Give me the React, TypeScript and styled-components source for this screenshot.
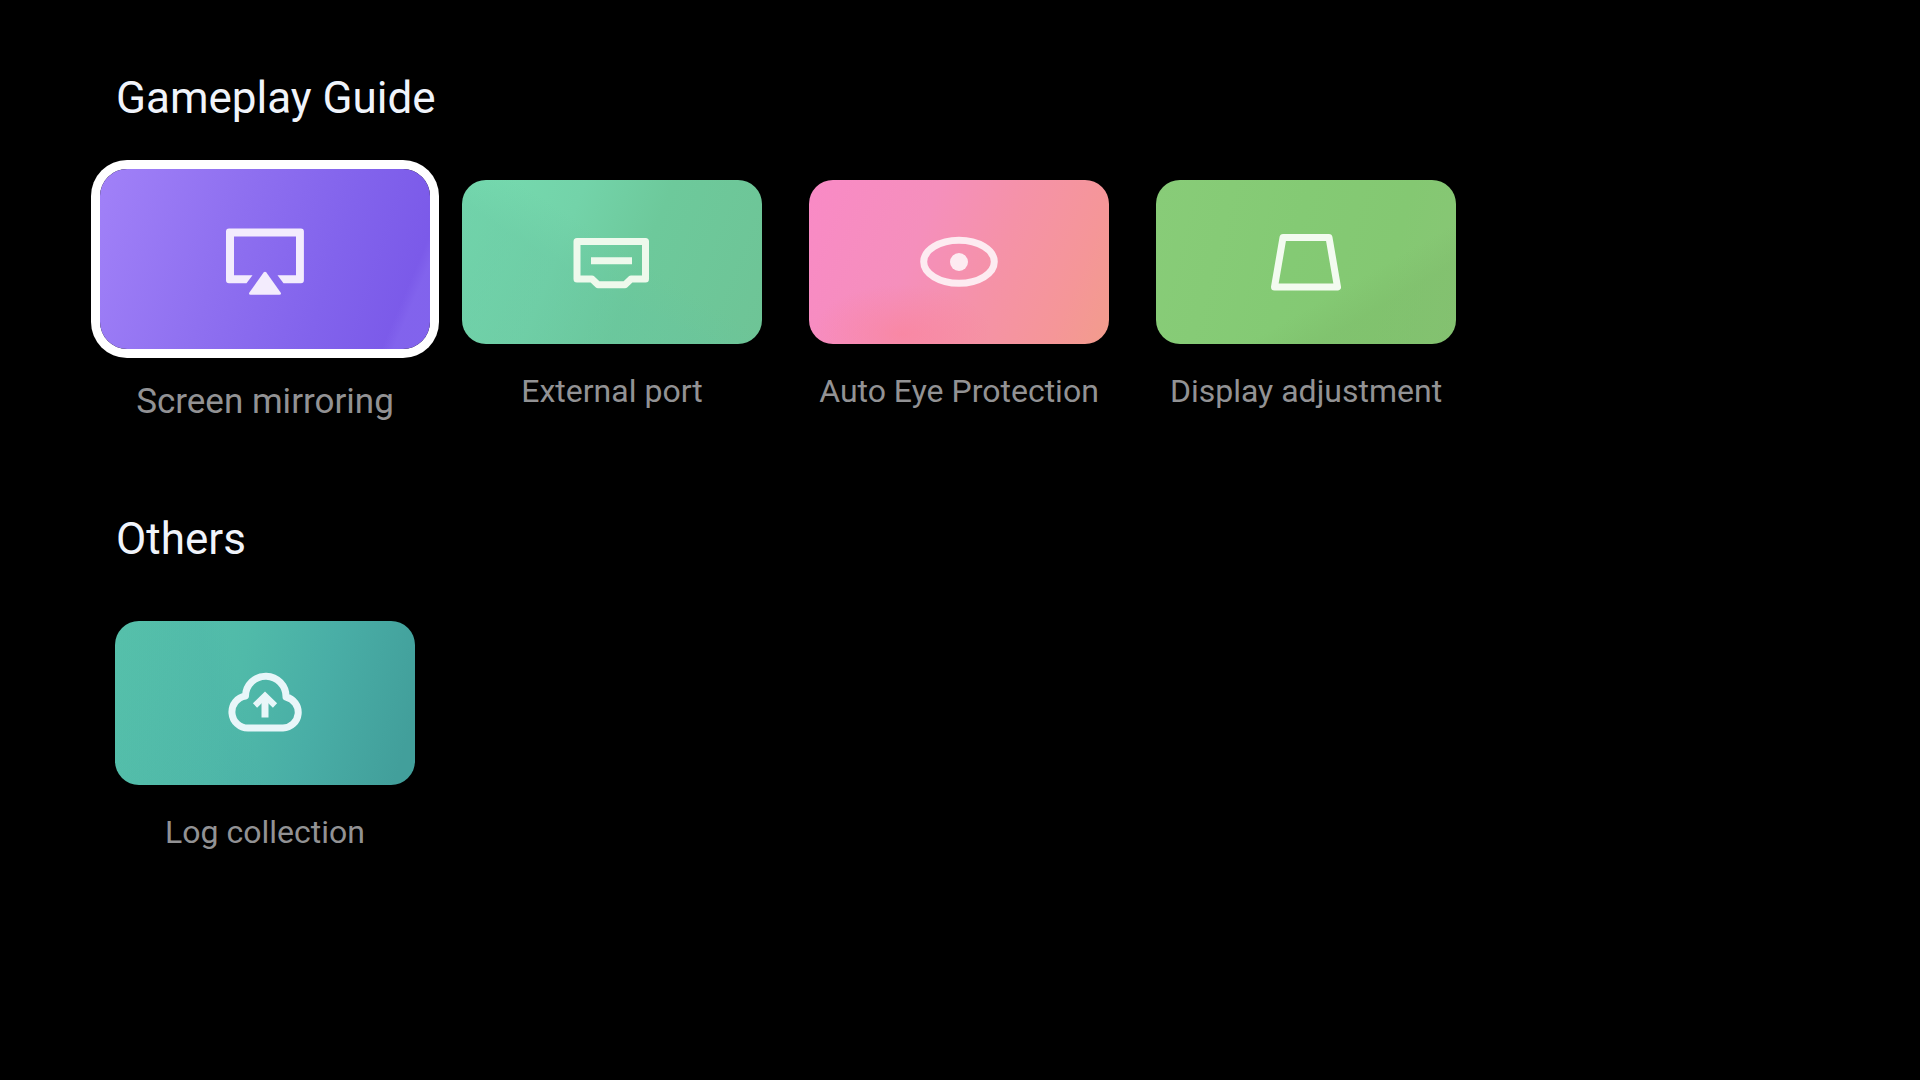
import React from "react";
import styled, { createGlobalStyle, css } from "styled-components";

const GlobalStyle = createGlobalStyle`
  *, *::before, *::after { box-sizing: border-box; }
  body {
    margin: 0;
    background: #000;
    font-family: Roboto, "Noto Sans", sans-serif;
  }
`;

const Page = styled.main`
  display: flex;
  flex-direction: column;
  gap: 102px;
  min-height: 100vh;
  padding: 72px 115px;
`;

const Section = styled.section`
  display: flex;
  flex-direction: column;
  gap: 56px;
`;

const Heading = styled.h2`
  margin: 0;
  padding: 0 1px;
  color: #f0f4fb;
  font-size: 44px;
  font-weight: 400;
  line-height: 52px;
`;

const CardRow = styled.div`
  display: flex;
  flex-wrap: wrap;
  align-items: flex-start;
  gap: 47px;
`;

const Tile = styled.span<{ $fill: string }>`
  display: flex;
  align-items: center;
  justify-content: center;
  width: 100%;
  height: 164px;
  border-radius: 24px;
  background: ${({ $fill }) => $fill};
`;

const Label = styled.span`
  font-size: 32px;
  line-height: 40px;
  white-space: nowrap;
`;

const Card = styled.button<{ $focused?: boolean }>`
  display: flex;
  flex-direction: column;
  align-items: center;
  gap: 27px;
  width: 300px;
  padding: 0;
  border: 0;
  outline: 0;
  background: none;
  color: #929294;
  font-family: inherit;
  cursor: pointer;

  ${({ $focused }) =>
    $focused &&
    css`
      gap: 31px;
      width: 330px;
      margin: -11px -15px -13px;

      ${Tile} {
        height: 180px;
        border-radius: 27px;
        box-shadow: 0 0 0 9px #fff;
      }

      ${Label} {
        font-size: 35px;
        line-height: 44px;
      }
    `}
`;

const Icon = styled.svg.attrs({ viewBox: "0 0 96 80", "aria-hidden": true })<{ $tint: string }>`
  width: 96px;
  height: 80px;
  color: ${({ $tint }) => $tint};
  fill: none;
  stroke: currentColor;
  stroke-width: 7;
  stroke-linejoin: round;
`;

const MirrorIcon = () => (
  <Icon $tint="#f3ecfd">
    <g fill="currentColor" stroke="none">
      <path d="M12 9.4H83.9Q86.9 9.4 86.9 12.4V61.2Q86.9 64.2 83.9 64.2H66.5L60.5 56.2H79V17.4H17V56.2H35.5L29.5 64.2H12Q9 64.2 9 61.2V12.4Q9 9.4 12 9.4Z" />
      <path d="M46.6 53.6Q48 51.8 49.4 53.6L63.6 73.4Q64.8 75.8 62.4 75.8H33.6Q31.2 75.8 32.4 73.4Z" />
    </g>
  </Icon>
);

const PortIcon = () => (
  <Icon $tint="#eef9ec">
    <path d="M13 19.5H81.5V57H67L61 62.8H34L28 57H13Z" />
    <path d="M27 38.7H68" />
  </Icon>
);

const EyeIcon = () => (
  <Icon $tint="#fdebf1">
    <ellipse cx="48" cy="39.8" rx="35.3" ry="21.5" />
    <circle cx="48" cy="40" r="9" fill="currentColor" stroke="none" />
  </Icon>
);

const KeystoneIcon = () => (
  <Icon $tint="#f3fbf0">
    <path d="M25 15.5H71L79.5 65H16.5Z" />
  </Icon>
);

const CloudIcon = () => (
  <Icon $tint="#e8f6f9">
    <path d="M31 65A16.1 16.1 0 0 1 28.5 33A20.2 20.2 0 0 1 69 34A15.7 15.7 0 0 1 66 65Z" />
    <path d="M48 34V54.5" />
    <path d="M38 42.5L48 32.8L58 42.5" strokeWidth="6" strokeLinejoin="miter" />
  </Icon>
);

interface Entry {
  label: string;
  fill: string;
  icon: React.ReactNode;
  focused?: boolean;
}

const groups: { title: string; entries: Entry[] }[] = [
  {
    title: "Gameplay Guide",
    entries: [
      {
        label: "Screen mirroring",
        fill: "linear-gradient(113deg, transparent 88%, rgba(145, 120, 245, 0.3) 91%), linear-gradient(108deg, #a181f8 0%, #8f70f0 38%, #8263ec 68%, #7b5ae9 90%)",
        icon: <MirrorIcon />,
        focused: true,
      },
      {
        label: "External port",
        fill: "linear-gradient(32deg, rgba(103, 196, 160, 0.35) 40%, transparent 56%), linear-gradient(112deg, #76dbb0 0%, #73d3a9 34%, #6dc99b 58%, #6ec496 100%)",
        icon: <PortIcon />,
      },
      {
        label: "Auto Eye Protection",
        fill: "radial-gradient(90px 50px at 31% 94%, rgba(252, 128, 146, 0.5), transparent), linear-gradient(112deg, #f98ac6 0%, #f58fbc 36%, #f592a8 60%, #f59698 84%, #f29c8c 100%)",
        icon: <EyeIcon />,
      },
      {
        label: "Display adjustment",
        fill: "linear-gradient(150deg, transparent 64%, rgba(120, 180, 100, 0.28) 76%), linear-gradient(105deg, #88cc78 0%, #84ca74 45%, #84c872 75%, #88c675 100%)",
        icon: <KeystoneIcon />,
      },
    ],
  },
  {
    title: "Others",
    entries: [
      {
        label: "Log collection",
        fill: "linear-gradient(76deg, rgba(70, 165, 165, 0.12) 36%, transparent 44%), linear-gradient(106deg, #58c4ab 0%, #50baa9 40%, #49aea6 65%, #429f9b 94%)",
        icon: <CloudIcon />,
      },
    ],
  },
];

export default function App() {
  return (
    <>
      <GlobalStyle />
      <Page>
        {groups.map(({ title, entries }) => (
          <Section key={title}>
            <Heading>{title}</Heading>
            <CardRow>
              {entries.map(({ label, fill, icon, focused }) => (
                <Card key={label} type="button" $focused={focused}>
                  <Tile $fill={fill}>{icon}</Tile>
                  <Label>{label}</Label>
                </Card>
              ))}
            </CardRow>
          </Section>
        ))}
      </Page>
    </>
  );
}
